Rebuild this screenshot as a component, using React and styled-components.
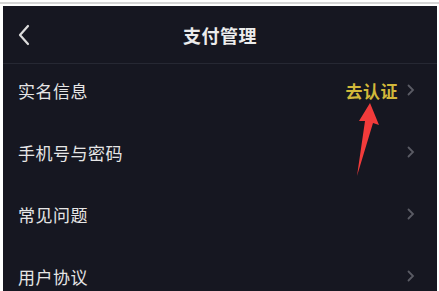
import React from "react";
import styled, { createGlobalStyle } from "styled-components";

const Global = createGlobalStyle`
  html, body {
    margin: 0;
    padding: 0;
    background: #ffffff;
  }
  body {
    font-family: "Noto Sans CJK SC", "Noto Sans", sans-serif;
  }
`;

const Frame = styled.div`
  width: 439px;
  height: 291px;
  overflow: hidden;
  background: #ffffff;
  position: relative;
`;

const TopLine = styled.div`
  height: 2px;
  margin-top: 2px;
  margin-bottom: 2px;
  background: #d6d6d6;
`;

const Screen = styled.div`
  margin: 0 2px 0 3px;
  height: 285px;
  background: #161721;
  display: flex;
  flex-direction: column;
`;

const Header = styled.div`
  flex-shrink: 0;
  height: 57px;
  display: flex;
  align-items: center;
  justify-content: center;
  position: relative;
  border-bottom: 1px solid #262833;
`;

const Back = styled.div`
  position: absolute;
  left: 13px;
  top: 18px;
  width: 16px;
  height: 22px;
`;

const Title = styled.h1`
  margin: 0;
  font-size: 18px;
  font-weight: 700;
  color: #ececec;
  letter-spacing: 0.5px;
`;

const Row = styled.div`
  flex-shrink: 0;
  height: 62px;
  box-sizing: border-box;
  display: flex;
  align-items: center;
  padding: 0 22px 10px 15px;
`;

const Label = styled.span`
  flex: 1;
  font-size: 17px;
  color: #e6e6e6;
  letter-spacing: 0.5px;
`;

const Action = styled.span`
  font-size: 17px;
  font-weight: 700;
  color: #d2b83a;
  margin-right: 9px;
  letter-spacing: 0.5px;
`;

const Chevron = () => (
  <svg width="8" height="12" viewBox="0 0 8 12">
    <path d="M1.5 1.5 L6 6 L1.5 10.5" fill="none" stroke="#5a5b64" strokeWidth="1.8" strokeLinecap="round" />
  </svg>
);

const Pointer = styled.svg`
  position: absolute;
  left: 345px;
  top: 100px;
`;

const rows = [
  { label: "实名信息", action: "去认证" },
  { label: "手机号与密码" },
  { label: "常见问题" },
  { label: "用户协议" },
];

export default function App() {
  return (
    <Frame>
      <Global />
      <TopLine />
      <Screen>
        <Header>
          <Back>
            <svg width="16" height="22" viewBox="0 0 16 22">
              <path d="M12 2 L4 11 L12 20" fill="none" stroke="#dcdcdc" strokeWidth="2.2" strokeLinecap="round" strokeLinejoin="round" />
            </svg>
          </Back>
          <Title>支付管理</Title>
        </Header>
        {rows.map((r) => (
          <Row key={r.label}>
            <Label>{r.label}</Label>
            {r.action && <Action>{r.action}</Action>}
            <Chevron />
          </Row>
        ))}
      </Screen>
      <Pointer width="40" height="80" viewBox="0 0 40 80">
        <path d="M25 3 L34 25 L28 23 L12 76 L20 21 L14 21 Z" fill="#f23b3b" />
      </Pointer>
    </Frame>
  );
}
